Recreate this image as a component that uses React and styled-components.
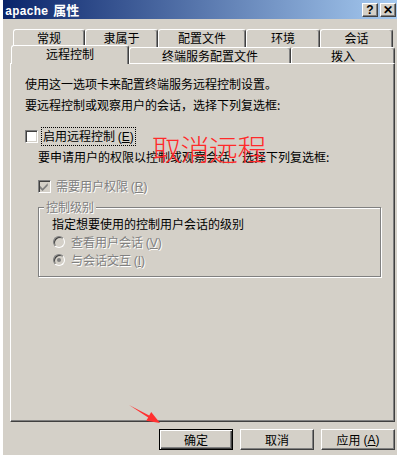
import React from "react";
import styled, { createGlobalStyle, css } from "styled-components";

const GlobalStyle = createGlobalStyle`
  html, body {
    margin: 0;
    padding: 0;
    background: #fff;
  }
  body {
    font-family: "Noto Sans CJK SC", "Liberation Sans", sans-serif;
    font-size: 12px;
    color: #000;
  }
`;

const Window = styled.div`
  position: relative;
  margin-left: 3px;
  width: 394px;
  height: 455px;
  background: #d4d0c8;
  overflow: hidden;
`;

const TitleBar = styled.div`
  height: 19px;
  display: flex;
  align-items: center;
  padding: 0 1px 0 2px;
  background: linear-gradient(to right, #0a246a, #a6caf0);
`;

const TitleText = styled.div`
  flex: 1;
  color: #fff;
  font-weight: bold;
  font-size: 13px;
  span:first-child {
    font-family: "Liberation Mono", monospace;
    font-size: 12px;
    margin-right: 2px;
  }
`;

const TitleBtn = styled.div`
  width: 16px;
  height: 14px;
  box-sizing: border-box;
  margin-left: 2px;
  background: #d4d0c8;
  border-top: 1px solid #fff;
  border-left: 1px solid #fff;
  border-right: 1px solid #404040;
  border-bottom: 1px solid #404040;
  box-shadow: inset -1px -1px 0 #808080;
  display: flex;
  align-items: center;
  justify-content: center;
  font-family: "Liberation Sans", sans-serif;
  font-weight: bold;
  font-size: 12px;
  line-height: 1;
`;

const Body = styled.div`
  padding: 10px 2px 0 7px;
`;

const TabRow = styled.div`
  display: flex;
  align-items: flex-end;
  height: 18px;
  padding-left: ${(p) => p.$indent}px;
  margin-top: ${(p) => p.$offset || 0}px;
`;

const Tab = styled.div`
  box-sizing: border-box;
  width: ${(p) => p.$w}px;
  height: 18px;
  background: #d4d0c8;
  border-top: 1px solid #fff;
  border-left: 1px solid #fff;
  border-right: 1px solid #404040;
  box-shadow: inset -1px 0 0 #808080;
  border-radius: 3px 3px 0 0;
  text-align: center;
  line-height: 16px;
  ${(p) =>
    p.$row2 &&
    css`
      height: 16px;
      line-height: 15px;
    `}
  ${(p) =>
    p.$active &&
    css`
      position: relative;
      z-index: 1;
      height: 19px;
      margin-bottom: -1px;
      line-height: 16px;
    `}
`;

const Panel = styled.div`
  box-sizing: border-box;
  width: 385px;
  height: 359px;
  border-top: 1px solid #fff;
  border-left: 1px solid #fff;
  border-right: 1px solid #404040;
  border-bottom: 1px solid #404040;
  box-shadow: inset -1px -1px 0 #808080;
  padding: 9px 0 0 14px;
`;

const Line = styled.div`
  line-height: 21px;
  padding-left: ${(p) => p.$indent || 0}px;
  white-space: nowrap;
`;

const CheckRow = styled.div`
  display: flex;
  align-items: center;
  height: 20px;
  margin-top: ${(p) => p.$top}px;
  margin-left: ${(p) => p.$indent || 0}px;
`;

const CheckBox = styled.div`
  box-sizing: border-box;
  width: 13px;
  height: 13px;
  background: ${(p) => (p.$disabled ? "#d4d0c8" : "#fff")};
  border-top: 1px solid #808080;
  border-left: 1px solid #808080;
  border-right: 1px solid #fff;
  border-bottom: 1px solid #fff;
  box-shadow: inset 1px 1px 0 #404040, inset -1px -1px 0 #d4d0c8;
  display: flex;
  align-items: center;
  justify-content: center;
`;

const Label = styled.span`
  margin-left: ${(p) => p.$gap || 4}px;
  padding: 0 1px;
  line-height: 16px;
  white-space: nowrap;
  ${(p) =>
    p.$focus &&
    css`
      outline: 1px dotted #000;
      outline-offset: 0;
    `}
  ${(p) =>
    p.$disabled &&
    css`
      color: #808080;
      text-shadow: 1px 1px 0 #fff;
    `}
`;

const Key = styled.span`
  font-family: "Liberation Sans", sans-serif;
  font-size: 12px;
  u {
    text-decoration: underline;
  }
`;

const GroupBox = styled.div`
  box-sizing: border-box;
  width: 343px;
  height: 70px;
  margin: 11px 0 0 13px;
  border: 1px solid #808080;
  box-shadow: 1px 1px 0 #fff, inset 1px 1px 0 #fff;
`;

const Legend = styled.div`
  width: fit-content;
  margin: -8px 0 0 5px;
  padding: 0 2px;
  background: #d4d0c8;
  line-height: 14px;
  color: #808080;
  text-shadow: 1px 1px 0 #fff;
`;

const GroupText = styled.div`
  line-height: 18px;
  margin-top: 1px;
  padding-left: 13px;
`;

const RadioRow = styled.div`
  display: flex;
  align-items: center;
  height: 18px;
  padding-left: 14px;
`;

const Radio = styled.div`
  box-sizing: border-box;
  width: 12px;
  height: 12px;
  border-radius: 50%;
  background: #d4d0c8;
  border: 1px solid;
  border-color: #808080 #fff #fff #808080;
  box-shadow: inset 1px 1px 0 #404040;
  display: flex;
  align-items: center;
  justify-content: center;
  &::after {
    content: "";
    width: 4px;
    height: 4px;
    border-radius: 50%;
    background: ${(p) => (p.$checked ? "#808080" : "transparent")};
  }
`;

const ButtonRow = styled.div`
  width: 385px;
  display: flex;
  justify-content: flex-end;
  gap: 7px;
  margin-top: 7px;
`;

const Button = styled.div`
  box-sizing: border-box;
  width: 74px;
  height: 21px;
  background: #d4d0c8;
  display: flex;
  align-items: center;
  justify-content: center;
  gap: 3px;
  border-top: 1px solid #fff;
  border-left: 1px solid #fff;
  border-right: 1px solid #404040;
  border-bottom: 1px solid #404040;
  box-shadow: inset -1px -1px 0 #808080;
  ${(p) =>
    p.$default &&
    css`
      border: 1px solid #000;
      box-shadow: inset 1px 1px 0 #fff, inset -1px -1px 0 #404040,
        inset -2px -2px 0 #808080;
    `}
`;

const Annotation = styled.div`
  position: absolute;
  left: 149px;
  top: 134px;
  font-size: 29px;
  line-height: 1;
  color: #ff2a2a;
  letter-spacing: -0.5px;
  font-weight: 300;
  white-space: nowrap;
`;

const ArrowSvg = styled.svg`
  position: absolute;
  left: 0;
  top: 0;
  pointer-events: none;
`;

const Check = ({ color }) => (
  <svg width="9" height="9" viewBox="0 0 7 7">
    <path d="M0 3 L2 5 L6 1 L6 3 L2 7 L0 5 Z" fill={color} />
  </svg>
);

const row1 = [
  ["常规", 72],
  ["隶属于", 73],
  ["配置文件", 88],
  ["环境", 74],
  ["会话", 73],
];

const row2 = [
  ["远程控制", 118, true],
  ["终端服务配置文件", 162],
  ["拨入", 104],
];

export default function App() {
  return (
    <>
      <GlobalStyle />
      <Window>
        <TitleBar>
          <TitleText>
            <span>apache</span> 属性
          </TitleText>
          <TitleBtn>?</TitleBtn>
          <TitleBtn>✕</TitleBtn>
        </TitleBar>
        <Body>
          <TabRow $indent={3}>
            {row1.map(([t, w]) => (
              <Tab key={t} $w={w}>
                {t}
              </Tab>
            ))}
          </TabRow>
          <TabRow $indent={1} $offset={-2}>
            {row2.map(([t, w, a]) => (
              <Tab key={t} $w={w} $row2 $active={a}>
                {t}
              </Tab>
            ))}
          </TabRow>
          <Panel>
            <Line>使用这一选项卡来配置终端服务远程控制设置。</Line>
            <Line>要远程控制或观察用户的会话，选择下列复选框:</Line>
            <CheckRow $top={11}>
              <CheckBox />
              <Label $focus $gap={4}>
                启用远程控制 <Key>(<u>E</u>)</Key>
              </Label>
            </CheckRow>
            <Line $indent={13}>要申请用户的权限以控制或观察会话，选择下列复选框:</Line>
            <CheckRow $top={9} $indent={13}>
              <CheckBox $disabled>
                <Check color="#808080" />
              </CheckBox>
              <Label $disabled $gap={4}>
                需要用户权限 <Key>(<u>R</u>)</Key>
              </Label>
            </CheckRow>
            <GroupBox>
              <Legend>控制级别</Legend>
              <GroupText>指定想要使用的控制用户会话的级别</GroupText>
              <RadioRow>
                <Radio />
                <Label $disabled $gap={5}>
                  查看用户会话 <Key>(<u>V</u>)</Key>
                </Label>
              </RadioRow>
              <RadioRow>
                <Radio $checked />
                <Label $disabled $gap={5}>
                  与会话交互 <Key>(<u>I</u>)</Key>
                </Label>
              </RadioRow>
            </GroupBox>
          </Panel>
          <ButtonRow>
            <Button $default>确定</Button>
            <Button>取消</Button>
            <Button>
              应用 <Key>(<u>A</u>)</Key>
            </Button>
          </ButtonRow>
        </Body>
        <Annotation>取消远程</Annotation>
        <ArrowSvg width="394" height="455">
          <polygon
            points="126,405 146.2,415.6 148.2,412.1 157,423 143.2,420.8 145.2,417.4"
            fill="#ff3030"
          />
        </ArrowSvg>
      </Window>
    </>
  );
}
